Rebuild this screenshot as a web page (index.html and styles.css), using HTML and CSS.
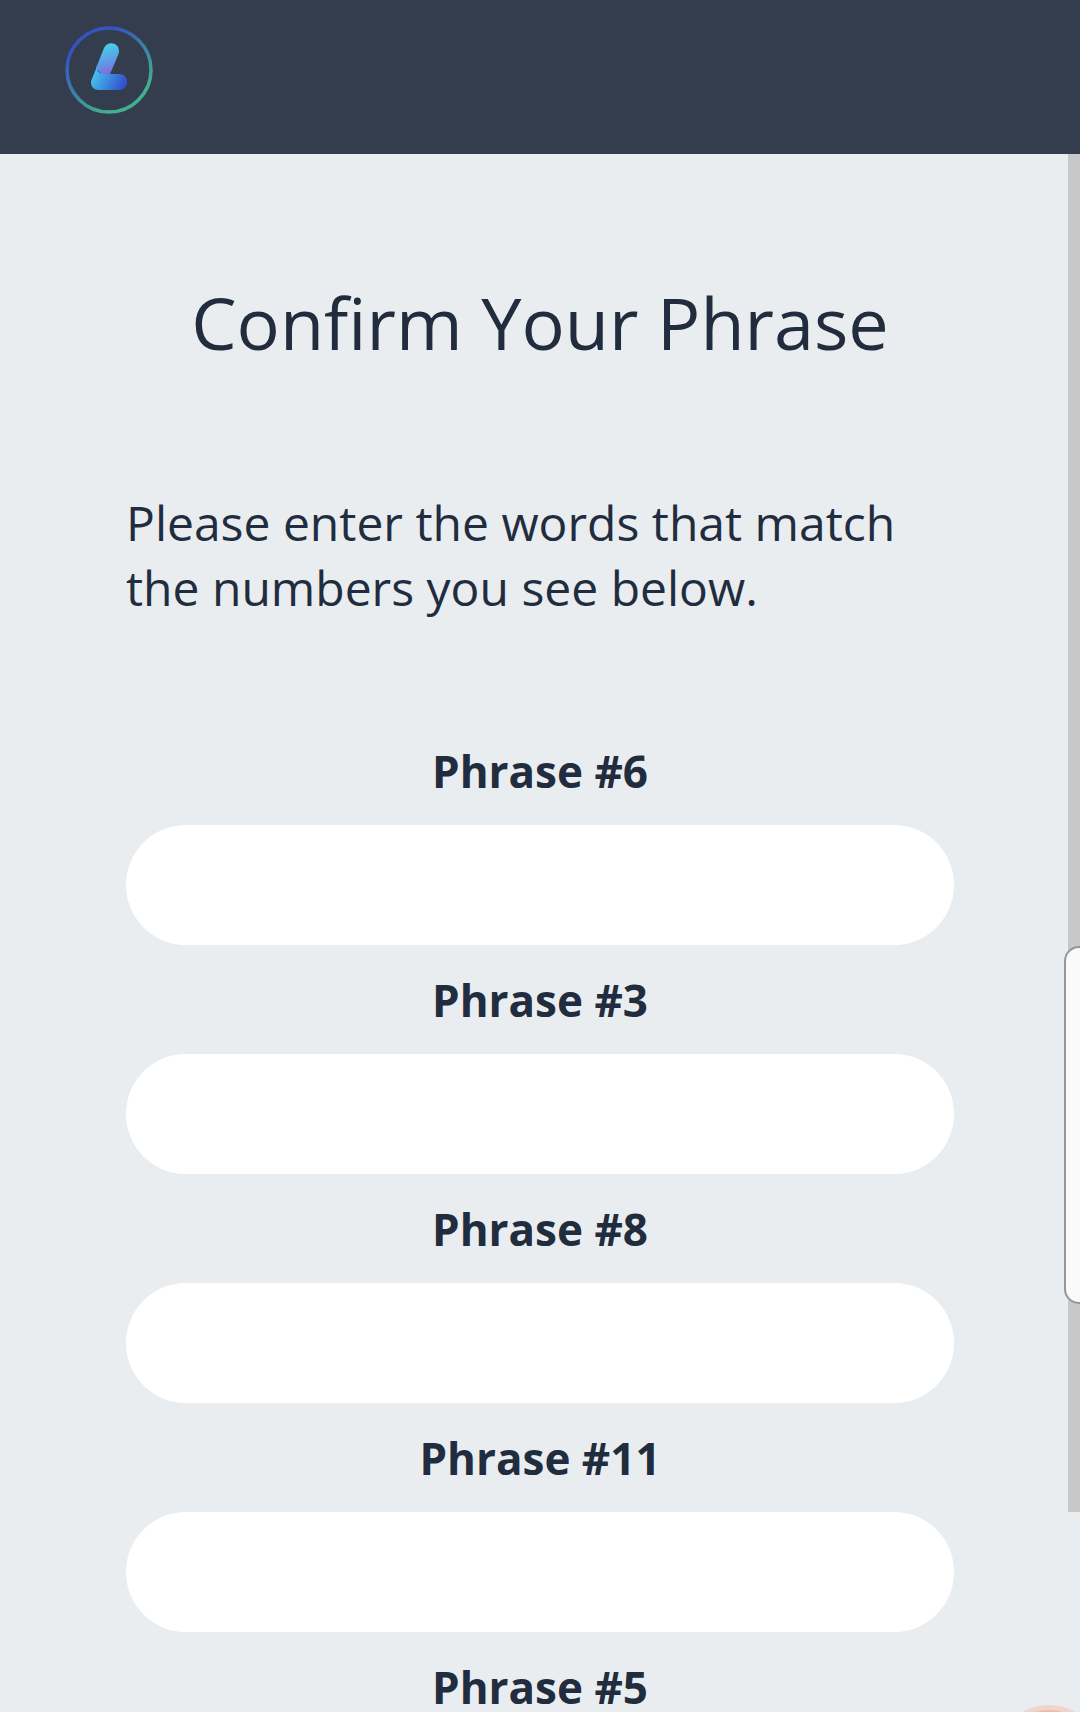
FILE: index.html
```html
<!doctype html>
<html lang="en">
<head>
    <meta charset="UTF-8">
    <meta name="viewport" content="width=device-width, initial-scale=1.0">
    <title>Confirm Your Phrase</title>
    <link rel="stylesheet" href="styles.css">
</head>
<body>

<header class="topbar">
    <svg class="logo" viewBox="0 0 88 88" aria-hidden="true">
        <defs>
            <linearGradient id="ring" x1="0.2" y1="0.1" x2="0.75" y2="0.95">
                <stop offset="0.1" stop-color="#3554c0"/>
                <stop offset="0.9" stop-color="#41b08c"/>
            </linearGradient>
            <linearGradient id="stem" gradientUnits="userSpaceOnUse" x1="36" y1="20" x2="46" y2="50">
                <stop offset="0" stop-color="#46d2ea"/>
                <stop offset="0.5" stop-color="#5c9ee6"/>
                <stop offset="1" stop-color="#8660dc"/>
            </linearGradient>
            <linearGradient id="foot" gradientUnits="userSpaceOnUse" x1="28" y1="46" x2="60" y2="62">
                <stop offset="0" stop-color="#45c8ec"/>
                <stop offset="0.5" stop-color="#3b88dc"/>
                <stop offset="1" stop-color="#3048cc"/>
            </linearGradient>
        </defs>
        <circle cx="44" cy="44" r="42" fill="none" stroke="url(#ring)" stroke-width="3.500"/>
        <path d="M39 22 C42 14.500 54 16 54 25 C54 27 53.500 28.500 52.500 30.500 L45 48 H36 L31 42 Z" fill="url(#stem)"/>
        <path d="M32 40.500 C31.500 44.500 34 48 38.500 48 H54 C65 48 65 64 54 64 H34 C28 64 25 59 26.300 54.500 Z" fill="url(#foot)"/>
    </svg>
</header>

<main class="page">
    <h1>Confirm Your Phrase</h1>
    <p class="intro">Please enter the words that match the numbers you see below.</p>

    <form class="phrases">
        <label for="phrase6">Phrase #6</label>
        <input type="text" id="phrase6">
        <label for="phrase3">Phrase #3</label>
        <input type="text" id="phrase3">
        <label for="phrase8">Phrase #8</label>
        <input type="text" id="phrase8">
        <label for="phrase11">Phrase #11</label>
        <input type="text" id="phrase11">
        <label for="phrase5">Phrase #5</label>
        <input type="text" id="phrase5">
    </form>

    <!-- scroll position -->
    <div class="scroll-thumb"></div>
</main>

<!-- edge panel handle and touch point -->
<div class="edge-handle"></div>
<div class="touch-point"></div>

</body>
</html>
```
FILE: styles.css
```css
* {
    box-sizing: border-box;
}
body {
    display: flex;
    flex-direction: column;
    position: relative;
    height: 100vh;
    margin: 0;
    overflow: hidden;
    background: #e9edf0;
    color: #212d3e;
    font-family: "Open Sans", "Noto Sans", sans-serif;
}
.topbar {
    flex: none;
    padding: 26px 65px 40px;
    background: #343d4d;
}
.logo {
    display: block;
    width: 88px;
    height: 88px;
}
.page {
    position: relative;
    flex: 1;
    min-height: 0;
    overflow: hidden;
    padding: 119px 126px 0;
}
h1 {
    margin: 0;
    font-size: 72px;
    font-weight: 400;
    line-height: 98px;
    text-align: center;
}
.intro {
    margin: 119px 0 96px;
    font-size: 48px;
    line-height: 65px;
}
.phrases {
    display: flex;
    flex-direction: column;
}
.phrases label {
    padding: 25px 0 24px;
    font-size: 44px;
    font-weight: 700;
    line-height: 60px;
    text-align: center;
}
.phrases input {
    width: 100%;
    height: 120px;
    padding: 0 48px;
    border: none;
    border-radius: 60px;
    background: #fff;
    color: inherit;
    font: inherit;
    font-size: 44px;
}
.scroll-thumb {
    position: absolute;
    top: 0;
    right: 0;
    width: 12px;
    height: 1358px;
    background: #c7c8ca;
}
.edge-handle {
    position: absolute;
    top: 946px;
    right: -14px;
    width: 30px;
    height: 358px;
    border: 2px solid #949698;
    border-radius: 15px;
    background: #fafafa;
}
.touch-point {
    position: absolute;
    right: -21px;
    bottom: -97px;
    width: 104px;
    height: 104px;
    border: 5px solid #efd5cd;
    border-radius: 50%;
    background: #edbba8;
}
```
